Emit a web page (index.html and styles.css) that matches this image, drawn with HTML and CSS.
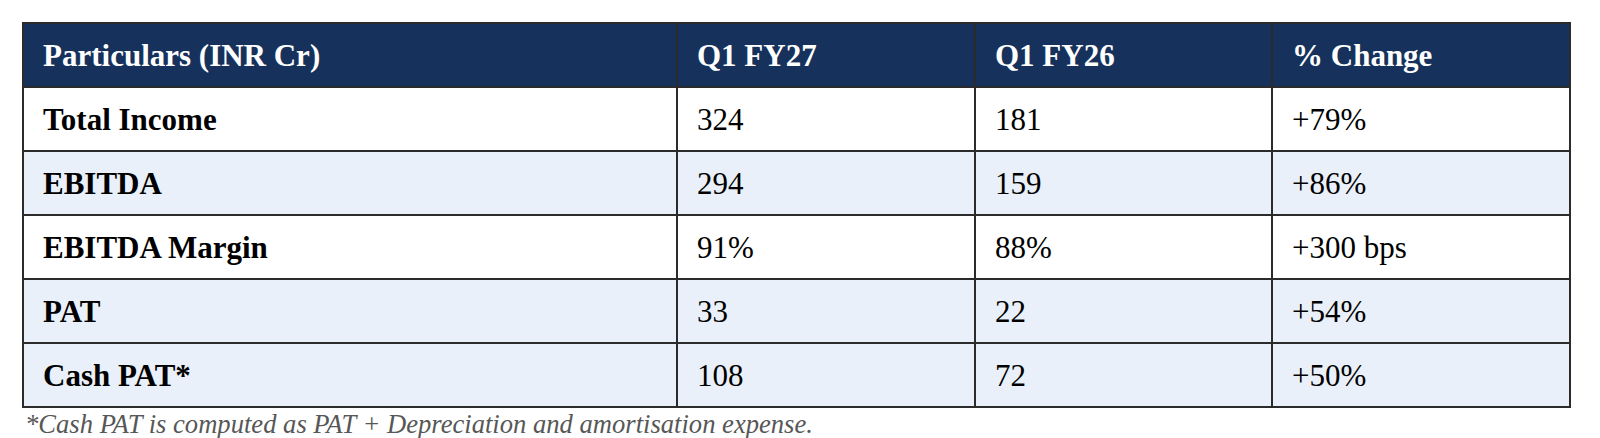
FILE: index.html
```html
<!DOCTYPE html>
<html>
<head>
<meta charset="utf-8">
<link rel="stylesheet" href="styles.css">
</head>
<body>
<div class="wrap">
  <table class="fin">
    <colgroup>
      <col class="c1"><col class="c2"><col class="c3"><col class="c4">
    </colgroup>
    <thead>
      <tr><th>Particulars (INR Cr)</th><th>Q1 FY27</th><th>Q1 FY26</th><th>% Change</th></tr>
    </thead>
    <tbody>
      <tr class="plain"><td class="label">Total Income</td><td>324</td><td>181</td><td>+79%</td></tr>
      <tr class="tint"><td class="label">EBITDA</td><td>294</td><td>159</td><td>+86%</td></tr>
      <tr class="plain"><td class="label">EBITDA Margin</td><td>91%</td><td>88%</td><td>+300 bps</td></tr>
      <tr class="tint"><td class="label">PAT</td><td>33</td><td>22</td><td>+54%</td></tr>
      <tr class="tint"><td class="label">Cash PAT*</td><td>108</td><td>72</td><td>+50%</td></tr>
    </tbody>
  </table>
  <p class="note">*Cash PAT is computed as PAT + Depreciation and amortisation expense.</p>
</div>
</body>
</html>
```
FILE: styles.css
```css
html, body {
  margin: 0;
  padding: 0;
  background: #ffffff;
}
.wrap {
  padding: 22px 0 0 22px;
  font-family: "Liberation Serif", "Times New Roman", serif;
}
.fin {
  border-collapse: collapse;
  width: 1547px;
  table-layout: fixed;
  border: 2px solid #2b2b2b;
}
.c1 { width: 654px; }
.c2 { width: 298px; }
.c3 { width: 297px; }
.c4 { width: 298px; }
.fin th, .fin td {
  border: 2px solid #2b2b2b;
  padding: 2px 0 0 19px;
  text-align: left;
  vertical-align: middle;
  font-size: 31px;
  line-height: 36px;
}
.fin tr { height: 64px; }
.fin th {
  background: #16325c;
  color: #ffffff;
  font-weight: bold;
}
.fin td { color: #000000; font-weight: normal; }
.fin td.label { font-weight: bold; }
.plain td { background: #ffffff; }
.tint td { background: #e9f0f9; }
.note {
  margin: 0;
  padding-left: 3px;
  font-style: italic;
  font-size: 26.6px;
  line-height: 33px;
  color: #575757;
}
```
